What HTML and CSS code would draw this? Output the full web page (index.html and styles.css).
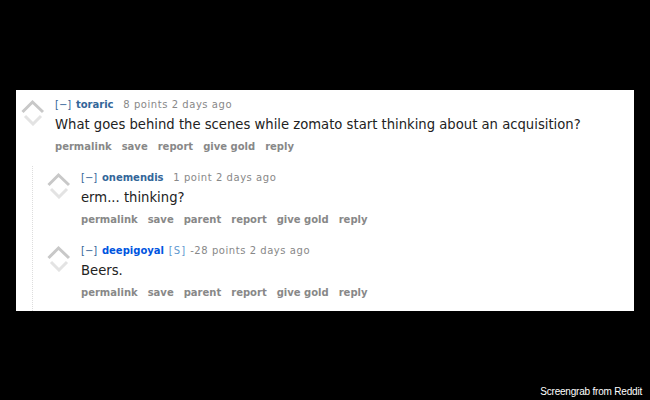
FILE: index.html
```html
<!DOCTYPE html>
<html>
<head>
<meta charset="utf-8">
<link rel="stylesheet" href="styles.css">
</head>
<body>
<div class="page">
  <div class="panel">
    <div class="comment">
      <div class="vote">
        <svg width="24" height="30" viewBox="0 0 24 30"><polyline class="up" points="1.5,16 11.5,6 22,16"/><polyline class="down" points="4,20 12,28 20,20"/></svg>
      </div>
      <div class="entry">
        <p class="tagline"><span class="expand">[−]</span> <a class="author">toraric</a> <span class="score">8 points 2 days ago</span></p>
        <p class="md">What goes behind the scenes while zomato start thinking about an acquisition?</p>
        <ul class="buttons"><li>permalink</li><li>save</li><li>report</li><li>give gold</li><li>reply</li></ul>
      </div>
    </div>
    <div class="child">
      <div class="comment">
        <div class="vote">
          <svg width="24" height="30" viewBox="0 0 24 30"><polyline class="up" points="1.5,16 11.5,6 22,16"/><polyline class="down" points="4,20 12,28 20,20"/></svg>
        </div>
        <div class="entry">
          <p class="tagline"><span class="expand">[−]</span> <a class="author">onemendis</a> <span class="score">1 point 2 days ago</span></p>
          <p class="md">erm... thinking?</p>
          <ul class="buttons"><li>permalink</li><li>save</li><li>parent</li><li>report</li><li>give gold</li><li>reply</li></ul>
        </div>
      </div>
      <div class="comment next">
        <div class="vote">
          <svg width="24" height="30" viewBox="0 0 24 30"><polyline class="up" points="1.5,16 11.5,6 22,16"/><polyline class="down" points="4,20 12,28 20,20"/></svg>
        </div>
        <div class="entry">
          <p class="tagline"><span class="expand">[−]</span> <a class="author submitter">deepigoyal</a> <span class="flag">[S]</span> <span class="score">-28 points 2 days ago</span></p>
          <p class="md">Beers.</p>
          <ul class="buttons"><li>permalink</li><li>save</li><li>parent</li><li>report</li><li>give gold</li><li>reply</li></ul>
        </div>
      </div>
    </div>
  </div>
  <div class="caption">Screengrab from Reddit</div>
</div>
</body>
</html>
```

FILE: styles.css
```css
html, body {
  margin: 0;
  padding: 0;
  background: #000;
}
.page {
  width: 650px;
  height: 400px;
  display: flex;
  flex-direction: column;
  font-family: "DejaVu Sans", Verdana, sans-serif;
}
.panel {
  margin: 90px 16px 0 16px;
  width: 618px;
  height: 221px;
  box-sizing: border-box;
  background: #fff;
  padding-top: 7px;
  display: flex;
  flex-direction: column;
}
.comment {
  display: flex;
}
.vote {
  width: 39px;
  flex: none;
  box-sizing: border-box;
  padding-left: 5px;
}
.vote svg {
  display: block;
  margin-top: -1px;
}
.vote polyline {
  fill: none;
  stroke-width: 3;
  stroke-linecap: butt;
  stroke-linejoin: miter;
}
.vote .up { stroke: #c8c8c8; }
.vote .down { stroke: #e3e3e3; }
.entry {
  flex: 1;
}
.tagline {
  margin: 0;
  padding-top: 1px;
  font-size: 10px;
  line-height: 14px;
  color: #888;
  white-space: nowrap;
  letter-spacing: 0.55px;
}
.expand {
  color: #369;
  letter-spacing: 0;
  margin-right: 1px;
}
.author {
  color: #369;
  font-weight: bold;
  letter-spacing: 0;
  margin-right: 6px;
}
.author.submitter {
  color: #0055df;
  margin-right: 1px;
}
.flag {
  color: #5f99cf;
  letter-spacing: 1.2px;
}
.md {
  margin: 0;
  padding: 3px 0 4px;
  font-size: 13.2px;
  line-height: 20px;
  color: #222;
}
.buttons {
  list-style: none;
  margin: 0;
  padding: 0;
  display: flex;
  gap: 10px;
  font-size: 10px;
  line-height: 16px;
  font-weight: bold;
  color: #888;
}
.child {
  flex: 1;
  margin: 11px 0 0 16px;
  border-left: 1px dotted #ddd;
  padding-left: 9px;
  padding-top: 4px;
}
.comment.next {
  margin-top: 15px;
}
.caption {
  margin-top: auto;
  margin-bottom: 2px;
  padding-right: 8px;
  text-align: right;
  color: #fff;
  font-family: "Liberation Sans", Arial, sans-serif;
  font-size: 10px;
  line-height: 12px;
  letter-spacing: -0.2px;
}
```
